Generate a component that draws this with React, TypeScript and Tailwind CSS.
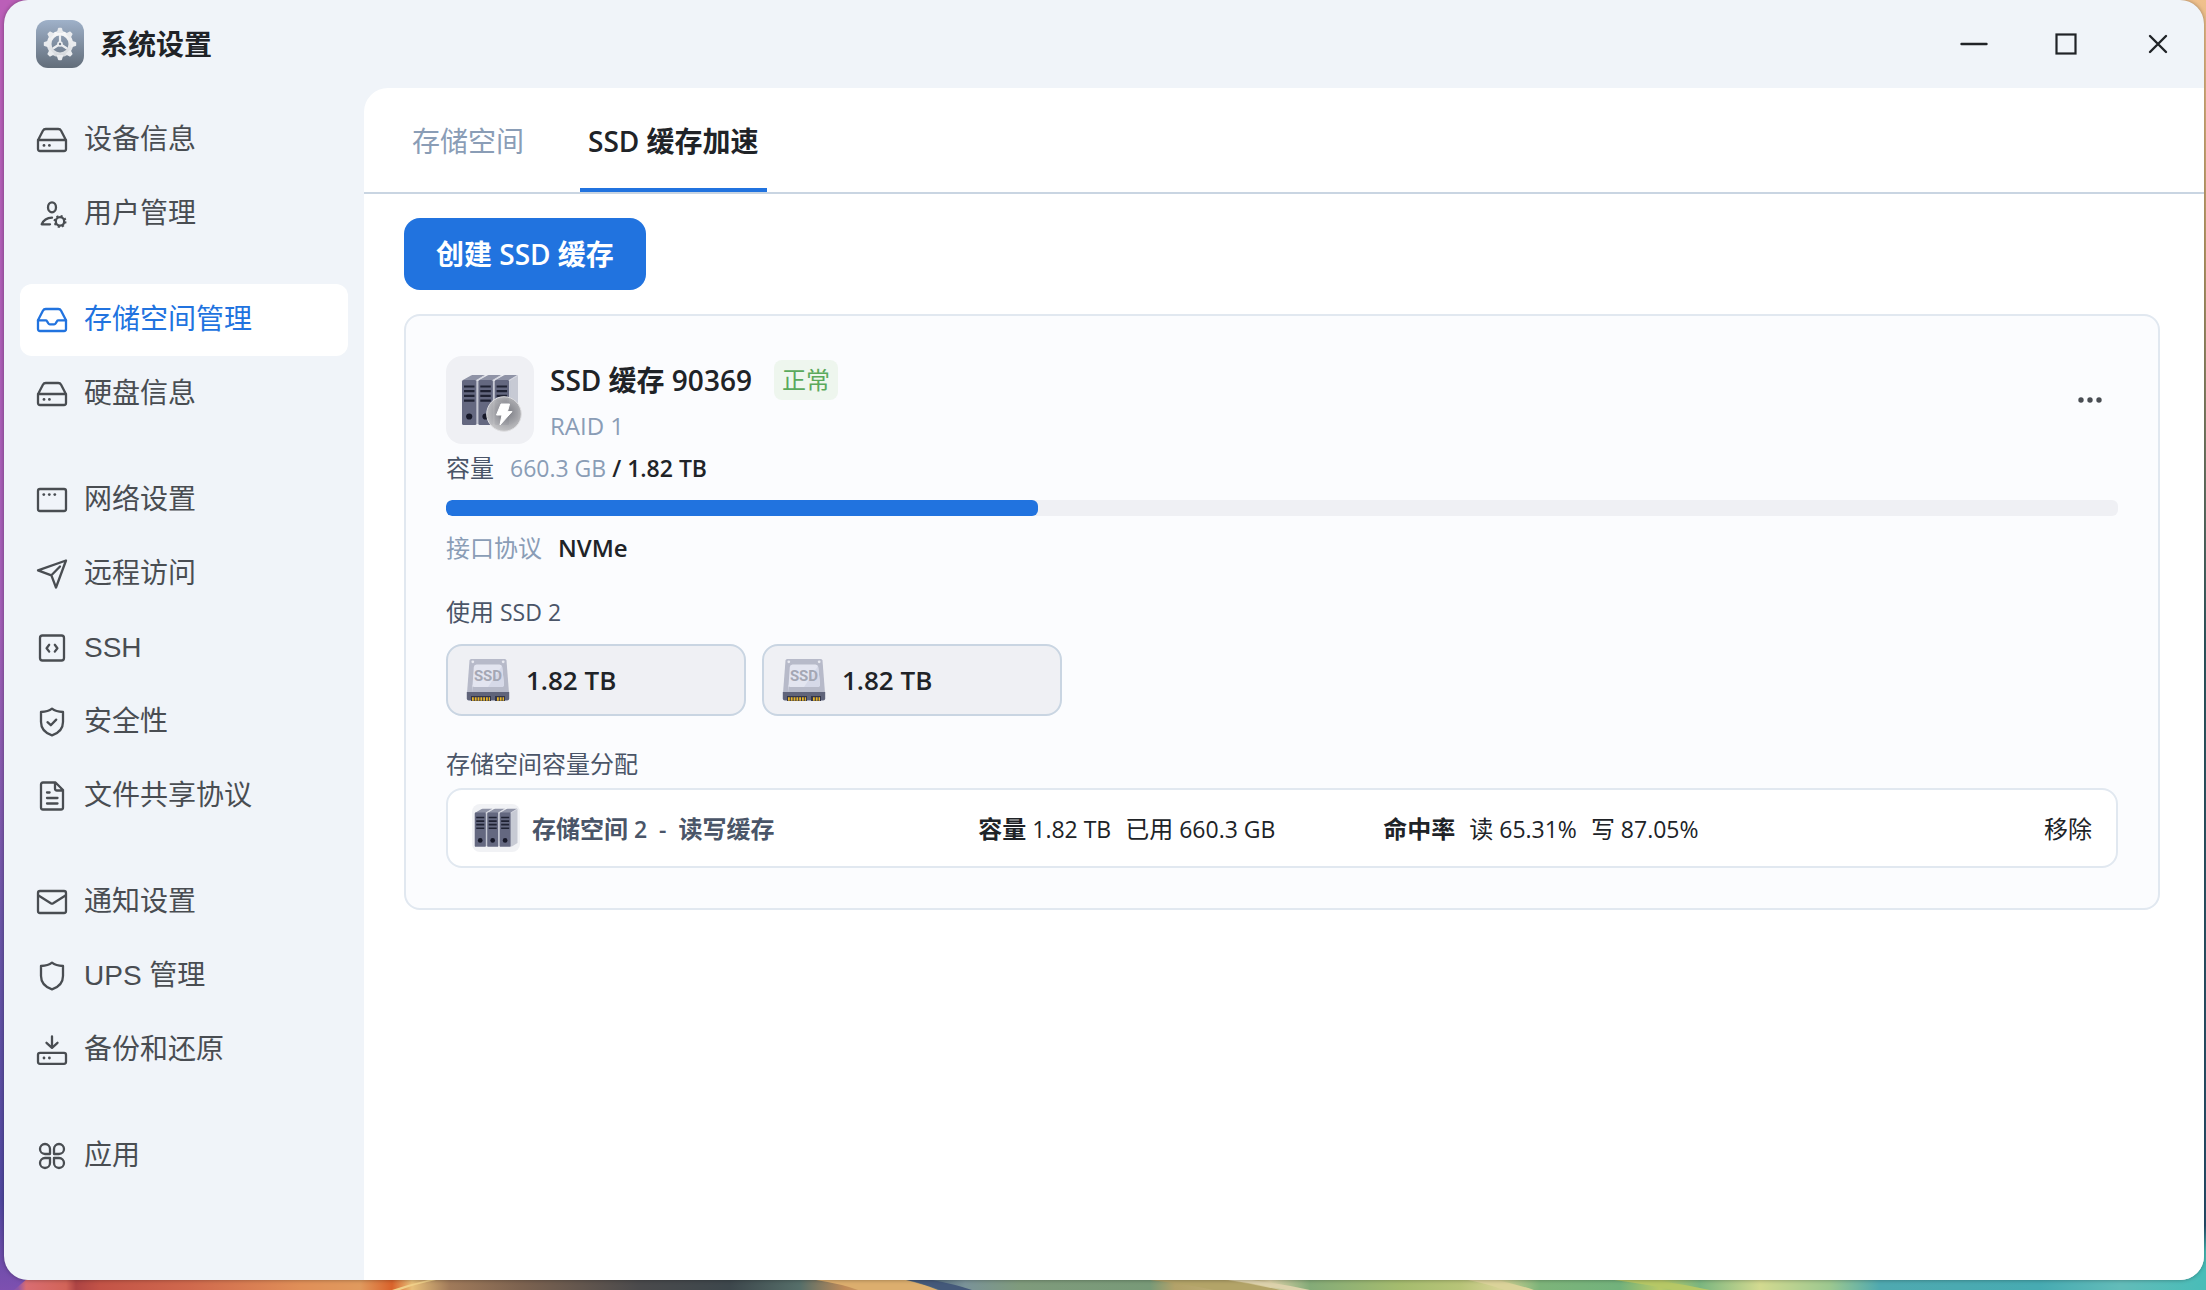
import type { ReactNode } from "react";

const SIDEBAR_FONT = "font-['Liberation_Sans','Noto_Sans_CJK_SC',sans-serif]";
const CONTENT_FONT = "font-['Open_Sans','Noto_Sans_CJK_SC',sans-serif]";

/* ---------- line icons for the sidebar ---------- */

function LineIcon({ children }: { children: ReactNode }) {
  return (
    <svg
      viewBox="0 0 32 32"
      className="size-8 shrink-0"
      fill="none"
      stroke="currentColor"
      strokeWidth="2.3"
      strokeLinecap="round"
      strokeLinejoin="round"
      aria-hidden="true"
    >
      {children}
    </svg>
  );
}

const dot = (cx: number, cy: number) => <circle cx={cx} cy={cy} r="1.4" fill="currentColor" stroke="none" />;

const DriveIcon = () => (
  <LineIcon>
    <path d="M2 16.2 6.9 6.8Q7.8 5 9.8 5h12.4q2 0 2.9 1.8L30 16.2V25q0 2-2 2H4q-2 0-2-2zM2 16h28" />
    {dot(8, 21.4)}
    {dot(13.4, 21.4)}
  </LineIcon>
);

const TrayIcon = () => (
  <LineIcon>
    <path d="M2 16.2 6.9 6.8Q7.8 5 9.8 5h12.4q2 0 2.9 1.8L30 16.2V25q0 2-2 2H4q-2 0-2-2z" />
    <path d="M2 16.4h7.6q1 0 1.5.9l1.3 2.2q.5.9 1.5.9h4.2q1 0 1.5-.9l1.3-2.2q.5-.9 1.5-.9H30" />
  </LineIcon>
);

const UserGearIcon = () => (
  <LineIcon>
    <ellipse cx="16" cy="9.3" rx="4" ry="5" />
    <path d="M16 19.6c-5 .2-8.600 2.500-10.300 6.700H14" />
    <circle cx="24" cy="23.400" r="4.200" />
    <circle cx="24" cy="23.400" r="5.500" strokeWidth="2" strokeDasharray="2 2.320" strokeLinecap="butt" />
  </LineIcon>
);

const WindowIcon = () => (
  <LineIcon>
    <rect x="2" y="5" width="28" height="22" rx="2" />
    {dot(7.8, 10.6)}
    {dot(13.3, 10.6)}
    {dot(18.8, 10.6)}
  </LineIcon>
);

const SendIcon = () => (
  <LineIcon>
    <path d="M30 2.500 2 12.300l13.400 5L20 29.500zM15.400 17.300 24 8.500" />
  </LineIcon>
);

const CodeIcon = () => (
  <LineIcon>
    <rect x="4" y="3.500" width="24" height="25" rx="2.500" />
    <path d="m13.200 12.800-2.600 3.400 2.600 3.400M18.800 12.800l2.600 3.400-2.600 3.400" />
  </LineIcon>
);

const SHIELD = "M16 2.600c2.800 2.200 6.500 3.100 11 3.400v10c0 7-4.600 11.200-11 13.400C9.600 27.200 5 23 5 16V6c4.500-.3 8.200-1.200 11-3.400z";

const ShieldCheckIcon = () => (
  <LineIcon>
    <path d={SHIELD} />
    <path d="m11.500 16.200 3.300 3 5.400-5.600" />
  </LineIcon>
);

const ShieldIcon = () => (
  <LineIcon>
    <path d={SHIELD} />
  </LineIcon>
);

const FileIcon = () => (
  <LineIcon>
    <path d="M7 2.500h12.500L27 10v17.500q0 2-2 2H7q-2 0-2-2v-23q0-2 2-2zM19 3v5.500q0 2 2 2h5.500M11 12.500h2.600M11 18h10.500M11 23.500h10.500" />
  </LineIcon>
);

const MailIcon = () => (
  <LineIcon>
    <rect x="2" y="5" width="28" height="22" rx="2" />
    <path d="m2.500 9.500 12.300 7.700q1.200.7 2.400 0L29.500 9.500" />
  </LineIcon>
);

const BackupIcon = () => (
  <LineIcon>
    <path d="M16 2.500v11M10.500 8.800 16 13.800l5.500-5" />
    <rect x="2" y="18.800" width="28" height="11" rx="2" />
    {dot(8, 24)}
    {dot(13.4, 24)}
  </LineIcon>
);

const AppsIcon = () => (
  <LineIcon>
    <path d="M14 14H9a5 5 0 1 1 5-5zM18 14h5a5 5 0 1 0-5-5zM14 18H9a5 5 0 1 0 5 5zM18 18h5a5 5 0 1 1-5 5z" />
  </LineIcon>
);

/* ---------- illustrations ---------- */

const TEETH = [0, 45, 90, 135, 180, 225, 270, 315];

function SettingsLogo() {
  return (
    <svg viewBox="0 0 48 48" className="size-12" aria-hidden="true">
      <defs>
        <linearGradient id="logoBg" x1="0" y1="0" x2="0" y2="1">
          <stop offset="0" stopColor="#9fb1c9" />
          <stop offset="1" stopColor="#626d7a" />
        </linearGradient>
        <linearGradient id="logoGear" x1="0" y1="8" x2="0" y2="40" gradientUnits="userSpaceOnUse">
          <stop offset="0" stopColor="#ffffff" />
          <stop offset="1" stopColor="#cfd3d8" />
        </linearGradient>
      </defs>
      <rect width="48" height="48" rx="12" fill="url(#logoBg)" />
      <circle cx="24" cy="24" r="10.800" fill="none" stroke="url(#logoGear)" strokeWidth="4.600" />
      <g fill="#e9ebee">
        {TEETH.map((a) => (
          <path key={a} d="M20.600 13 22 8.400q.2-.6.8-.6h2.400q.6 0 .8.600L27.400 13z" transform={`rotate(${a} 24 24)`} />
        ))}
      </g>
      <path d="M24 23V15M24 24l-7 4.500M24 24l7 4.500" stroke="#eceef1" strokeWidth="2.200" />
      <circle cx="24" cy="24" r="2.800" fill="#eceef1" />
      <circle cx="24" cy="24" r="1.200" fill="#76818f" />
    </svg>
  );
}

function Towers() {
  return (
    <>
      <path d="M48 24 56 19.500V64L48 69z" fill="#c7cad4" />
      {[0, 16.3, 32.6].map((dx) => (
        <g key={dx} transform={`translate(${dx} 0)`}>
          <path d="M0 24.500 9 19.500q.6-.4 1.400-.4H23L14.500 24.500z" fill="#8f93a6" />
          <path d="M14.500 24.500 23 19.500" stroke="#d5d7e0" strokeWidth="1.200" />
          <rect x="0" y="24" width="14.600" height="45" rx="1.600" fill="#646880" />
          <path d="M15.400 25v43" stroke="#c3c6d2" strokeWidth="1.200" />
          <path d="M2 30.500h10.500M2 35.200h10.500M2 39.900h10.500M2 44.600h10.500" stroke="#1f2233" strokeWidth="2.200" />
          <circle cx="7.200" cy="60.500" r="3.100" fill="#161828" />
        </g>
      ))}
    </>
  );
}

function CachePoolArt() {
  return (
    <svg viewBox="0 0 88 88" className="size-[88px] shrink-0 rounded-2xl bg-[#eff0f4]" aria-hidden="true">
      <defs>
        <radialGradient id="flash" cx="0.6" cy="0.45" r="0.6">
          <stop offset="0" stopColor="#77787f" />
          <stop offset="1" stopColor="#c4c4c6" />
        </radialGradient>
      </defs>
      <g transform="translate(16 0)">
        <Towers />
      </g>
      <circle cx="58" cy="58" r="17.300" fill="url(#flash)" fillOpacity="0.93" stroke="#dedee0" strokeWidth="1" />
      <path d="M55 48h8.500l-2 7.600H66L54 69l2-10h-5.500z" fill="#fff" stroke="#fff" strokeLinejoin="round" />
    </svg>
  );
}

function StoragePoolArt() {
  return (
    <svg viewBox="0 0 88 88" className="size-12 shrink-0 rounded-lg bg-[#f1f2f5]" aria-hidden="true">
      <g transform="translate(5 -18) scale(1.4)">
        <Towers />
      </g>
    </svg>
  );
}

function SsdArt() {
  return (
    <svg viewBox="0 0 44 44" className="size-11 shrink-0" aria-hidden="true">
      <path d="M3.500 2.500Q3.700 1 5.200 1h33.600q1.500 0 1.700 1.500L43 35H1z" fill="#b7bac9" />
      <path d="M6 35 7.800 9Q8 6.500 10.500 6.500h23Q36 6.500 36.200 9L38 26q.2 3-2.500 3h-27Q5.800 29 6 26z" fill="#e3e5f0" />
      <path d="M22 29 36 8l2 18q.2 3-2.500 3z" fill="#d6d9e8" />
      <circle cx="6.800" cy="3.800" r="1.400" fill="#e8e9f0" />
      <circle cx="37.200" cy="3.800" r="1.400" fill="#e8e9f0" />
      <text x="22" y="23" textAnchor="middle" fontSize="15" fontWeight="700" fill="#a4a7b4" fontFamily="Roboto, sans-serif">
        SSD
      </text>
      <path d="M.8 34h42.400v6.500q0 2-2 2H2.800q-2 0-2-2z" fill="#60647a" />
      <path d="M5 38h20v5H5zM29 38h10v5H29z" fill="#33364a" />
      <path d="M6 41h18M31 41h7" stroke="#e9b528" strokeWidth="3.400" strokeDasharray="1.800 1" />
    </svg>
  );
}

const STRIP: [number, string][] = [
  [0, "#7a4fae"], [18, "#8e55a8"], [26, "#d96d72"], [66, "#d26458"], [76, "#ad4444"], [100, "#c35347"],
  [190, "#d0694d"], [300, "#e08f58"], [360, "#e09a5e"], [392, "#d9622b"], [412, "#e8c07a"], [450, "#a07a5a"],
  [520, "#7d6350"], [640, "#4a4a4c"], [730, "#3d474c"], [800, "#566f6a"], [845, "#c08a58"], [905, "#e5bc78"],
  [925, "#4b6277"], [965, "#7a9399"], [1020, "#7f9b7c"], [1150, "#789a78"], [1175, "#b3a269"], [1240, "#c0b078"],
  [1270, "#ddd2a8"], [1310, "#84ab78"], [1400, "#a5bc6e"], [1460, "#b7c478"], [1500, "#d6d294"], [1540, "#7db47a"],
  [1620, "#72b27c"], [1660, "#b9c967"], [1700, "#7bb680"], [1760, "#d3da90"], [1830, "#9cc890"], [1880, "#4fa9b0"],
  [2040, "#47abb2"], [2120, "#63bcb9"], [2206, "#48bdb8"],
];

function Wallpaper() {
  return (
    <svg
      viewBox="0 0 2206 1290"
      preserveAspectRatio="none"
      className="absolute inset-0 h-full w-full"
      aria-hidden="true"
    >
      <defs>
        <linearGradient id="wallLeft" x1="0" y1="0" x2="0" y2="1">
          <stop offset="0" stopColor="#bb5fb8" />
          <stop offset="0.48" stopColor="#a45fb8" />
          <stop offset="0.72" stopColor="#6a55a8" />
          <stop offset="0.93" stopColor="#5048a0" />
          <stop offset="1" stopColor="#7d50b0" />
        </linearGradient>
        <linearGradient id="wallRight" x1="0" y1="0" x2="0" y2="1">
          <stop offset="0" stopColor="#f0c08c" />
          <stop offset="0.2" stopColor="#b99c68" />
          <stop offset="0.5" stopColor="#2f5a63" />
          <stop offset="0.95" stopColor="#27506e" />
          <stop offset="0.97" stopColor="#48bdb8" />
        </linearGradient>
        <linearGradient id="wallBottom" x1="0" y1="0" x2="2206" y2="0" gradientUnits="userSpaceOnUse">
          {STRIP.map(([x, color]) => (
            <stop key={x} offset={x / 2206} stopColor={color} />
          ))}
        </linearGradient>
      </defs>
      <rect width="1103" height="1290" fill="url(#wallLeft)" />
      <rect x="1103" width="1103" height="1290" fill="url(#wallRight)" />
      <path d="M28 1278H2206V1290H14z" fill="url(#wallBottom)" />
      <path d="M392 1290q18-6 36-10h8q-20 4-36 10z" fill="#f0d08a" />
      <path d="M816 1280h88q20 4 34 10h-80q-16-6-42-10z" fill="#dcae6e" />
      <path d="M906 1280h26q22 4 40 10h-32q-14-6-34-10z" fill="#44597a" />
      <path d="M1150 1280h74q30 4 56 10h-66q-28-6-64-10z" fill="#b3a468" />
      <path d="M1228 1280h24q30 4 58 10h-24q-28-6-58-10z" fill="#ddd2ac" />
      <path d="M1468 1280h28q20 4 38 10h-30q-16-6-36-10z" fill="#dbd39a" />
      <path d="M1614 1280h40q28 4 56 10h-38q-26-6-58-10z" fill="#b6c866" />
    </svg>
  );
}

/* ---------- sidebar ---------- */

type NavItem = { label: string; icon: ReactNode; active?: boolean };

const NAV: NavItem[][] = [
  [
    { label: "设备信息", icon: <DriveIcon /> },
    { label: "用户管理", icon: <UserGearIcon /> },
  ],
  [
    { label: "存储空间管理", icon: <TrayIcon />, active: true },
    { label: "硬盘信息", icon: <DriveIcon /> },
  ],
  [
    { label: "网络设置", icon: <WindowIcon /> },
    { label: "远程访问", icon: <SendIcon /> },
    { label: "SSH", icon: <CodeIcon /> },
    { label: "安全性", icon: <ShieldCheckIcon /> },
    { label: "文件共享协议", icon: <FileIcon /> },
  ],
  [
    { label: "通知设置", icon: <MailIcon /> },
    { label: "UPS 管理", icon: <ShieldIcon /> },
    { label: "备份和还原", icon: <BackupIcon /> },
  ],
  [{ label: "应用", icon: <AppsIcon /> }],
];

function Sidebar() {
  return (
    <nav aria-label="系统设置" className="flex w-[360px] shrink-0 flex-col gap-[34px] px-4 pt-4">
      {NAV.map((group) => (
        <ul key={group[0].label} className="flex flex-col gap-0.5">
          {group.map((item) => (
            <li key={item.label}>
              <a
                href="#"
                aria-current={item.active ? "page" : undefined}
                className={
                  item.active
                    ? "flex h-[72px] items-center gap-4 rounded-xl bg-white px-4 text-[28px] text-[#2173df]"
                    : "flex h-[72px] items-center gap-4 rounded-xl px-4 text-[28px] text-[#494d52]"
                }
              >
                {item.icon}
                <span className="leading-9">{item.label}</span>
              </a>
            </li>
          ))}
        </ul>
      ))}
    </nav>
  );
}

/* ---------- title bar ---------- */

function TitleBar() {
  const control = "flex h-[88px] w-[92px] items-center justify-center";
  return (
    <header className="flex h-[88px] shrink-0 items-center justify-between pl-8">
      <div className="flex items-center gap-4">
        <SettingsLogo />
        <h1 className="pt-1 text-[28px] leading-9 font-bold">系统设置</h1>
      </div>
      <div className="flex">
        <button type="button" aria-label="最小化" className={control}>
          <svg viewBox="0 0 28 28" className="size-7" stroke="currentColor" strokeWidth="2.400" strokeLinecap="round">
            <path d="M1.500 14h25" />
          </svg>
        </button>
        <button type="button" aria-label="最大化" className={control}>
          <svg viewBox="0 0 28 28" className="size-7" fill="none" stroke="currentColor" strokeWidth="2.200">
            <rect x="4.500" y="4.500" width="19" height="19" />
          </svg>
        </button>
        <button type="button" aria-label="关闭" className={control}>
          <svg viewBox="0 0 28 28" className="size-7" stroke="currentColor" strokeWidth="2.400" strokeLinecap="round">
            <path d="m6 6 16 16M22 6 6 22" />
          </svg>
        </button>
      </div>
    </header>
  );
}

/* ---------- content ---------- */

function Tabs() {
  return (
    <div role="tablist" className="flex h-[106px] shrink-0 gap-12 border-b-2 border-[#c9d5e2] pl-10 text-[28px]">
      <button
        type="button"
        role="tab"
        aria-selected="false"
        className="border-b-4 border-transparent px-2 pt-1.5 text-[#8a9db6]"
      >
        存储空间
      </button>
      <button
        type="button"
        role="tab"
        aria-selected="true"
        className="border-b-4 border-[#2173df] px-2 pt-1.5 font-semibold"
      >
        SSD 缓存加速
      </button>
    </div>
  );
}

function SsdChip({ size }: { size: string }) {
  return (
    <li className="flex h-[72px] w-[300px] items-center gap-4 rounded-2xl border-2 border-[#c9d5e2] bg-[#eff0f4] px-[18px]">
      <SsdArt />
      <span className="text-[26px] leading-8 font-semibold">{size}</span>
    </li>
  );
}

function CacheCard() {
  const usedPercent = 35.4;
  return (
    <section className="mt-6 rounded-2xl border-2 border-[#e1e8f0] bg-[#fbfcfe] p-10">
      <div className="flex items-center gap-4">
        <CachePoolArt />
        <div className="flex flex-1 flex-col gap-2 pt-1">
          <div className="flex items-center gap-[22px]">
            <h2 className="text-[28px] leading-10 font-semibold">SSD 缓存 90369</h2>
            <span className="rounded-lg bg-[#eef6ee] px-2 text-2xl leading-10 text-[#5aa95c]">正常</span>
          </div>
          <span className="text-2xl leading-9 text-[#8a9db6]">RAID 1</span>
        </div>
        <button type="button" aria-label="更多" className="flex size-14 items-center justify-center text-[#494d52]">
          <svg viewBox="0 0 24 24" className="size-6" fill="currentColor">
            <circle cx="3" cy="12" r="2.700" />
            <circle cx="12" cy="12" r="2.700" />
            <circle cx="21" cy="12" r="2.700" />
          </svg>
        </button>
      </div>

      <div className="mt-1.5 flex items-center gap-4 leading-9">
        <span id="capacity" className="text-2xl leading-9 text-[#4a5568]">容量</span>
        <span className="flex gap-1.5 text-[23px] leading-9">
          <span className="text-[#8a9db6]">660.3 GB</span>
          <span className="font-semibold">/ 1.82 TB</span>
        </span>
      </div>
      <div
        role="progressbar"
        aria-labelledby="capacity"
        aria-valuenow={usedPercent}
        className="mt-3.5 h-4 overflow-hidden rounded-md bg-[#eff0f4]"
      >
        <div className="h-full rounded-md bg-[#2173df]" style={{ width: `${usedPercent}%` }} />
      </div>
      <div className="mt-3.5 flex items-center gap-4 text-2xl leading-9">
        <span className="text-[#8a9db6]">接口协议</span>
        <span className="font-semibold">NVMe</span>
      </div>

      <h3 className="mt-7 flex items-center gap-1.5 leading-9 text-[#4a5568]">
        <span className="text-2xl leading-9">使用</span>
        <span className="text-[23px] leading-9">SSD 2</span>
      </h3>
      <ul className="mt-3.5 flex gap-4">
        <SsdChip size="1.82 TB" />
        <SsdChip size="1.82 TB" />
      </ul>

      <h3 className="mt-[30px] text-2xl leading-9 text-[#4a5568]">存储空间容量分配</h3>
      <div className="mt-1.5 grid h-20 grid-cols-[5fr_4fr_7fr] items-center rounded-2xl border-2 border-[#e1e8f0] bg-white px-6 text-[23px]">
        <div className="flex items-center gap-3 font-semibold text-[#4a5568]">
          <StoragePoolArt />
          <span className="pt-0.5">
            <span className="text-2xl">存储空间</span> 2 &nbsp;-&nbsp; <span className="text-2xl">读写缓存</span>
          </span>
        </div>
        <div className="flex gap-3.5 pt-0.5">
          <span>
            <strong className="text-2xl font-bold">容量</strong> 1.82 TB
          </span>
          <span>
            <span className="text-2xl">已用</span> 660.3 GB
          </span>
        </div>
        <div className="flex items-center gap-3.5 pt-0.5">
          <strong className="text-2xl font-bold">命中率</strong>
          <span>
            <span className="text-2xl">读</span> 65.31%
          </span>
          <span>
            <span className="text-2xl">写</span> 87.05%
          </span>
          <button type="button" className="ml-auto text-2xl">
            移除
          </button>
        </div>
      </div>
    </section>
  );
}

export default function App() {
  return (
    <div className={`relative flex min-h-screen pr-0.5 pb-2.5 pl-1 text-[#202327] ${SIDEBAR_FONT}`}>
      <Wallpaper />
      <div className="relative flex flex-1 flex-col overflow-hidden rounded-3xl bg-[#f0f4f9] shadow-[0_0_4px_rgba(0,0,0,0.35)]">
        <TitleBar />
        <div className="flex flex-1">
          <Sidebar />
          <main className={`flex min-w-0 flex-1 flex-col rounded-tl-3xl bg-white ${CONTENT_FONT}`}>
            <Tabs />
            <div className="pt-6 pr-11 pb-10 pl-10">
              <button
                type="button"
                className="h-[72px] rounded-2xl bg-[#2173df] px-8 text-[28px] font-semibold text-white"
              >
                创建 SSD 缓存
              </button>
              <CacheCard />
            </div>
          </main>
        </div>
      </div>
    </div>
  );
}
